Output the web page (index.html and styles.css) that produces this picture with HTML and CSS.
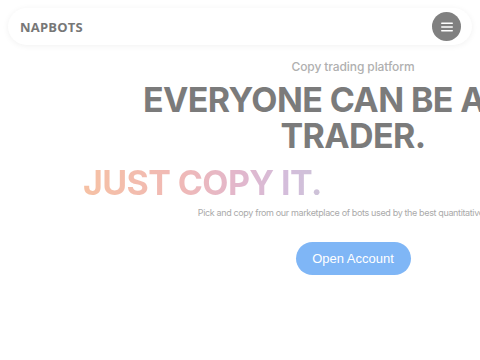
FILE: index.html
```html
<!DOCTYPE html>
<html>
<head>
<meta charset="utf-8">
<link rel="stylesheet" href="styles.css">
</head>
<body>
<div class="page">
  <header class="nav">
    <div class="logo">NAPBOTS</div>
    <button class="menu" aria-label="menu">
      <svg width="12" height="10" viewBox="0 0 12 10"><rect x="0" y="0.5" width="12" height="1.6" rx="0.8" fill="#fff"/><rect x="0" y="4.2" width="12" height="1.6" rx="0.8" fill="#fff"/><rect x="0" y="7.9" width="12" height="1.6" rx="0.8" fill="#fff"/></svg>
    </button>
  </header>
  <section class="hero">
    <p class="eyebrow">Copy trading platform</p>
    <h1 class="title"><span class="line1">EVERYONE CAN BE A</span><span class="line2">TRADER.</span></h1>
    <div class="copy-row"><span class="gradient">JUST COPY IT.</span></div>
    <p class="lead">Pick and copy from our marketplace of bots used by the best quantitative funds</p>
    <div class="cta-row"><a class="cta">Open Account</a></div>
  </section>
</div>
</body>
</html>
```
FILE: styles.css
```css
html, body { margin: 0; padding: 0; background: #fff; }
body { width: 480px; height: 360px; overflow: hidden; font-family: Inter, "Liberation Sans", sans-serif; }
.page { padding: 8px 8px 0 8px; }
.nav {
  height: 37px;
  display: flex; align-items: center; justify-content: space-between;
  padding: 0 12px;
  border-radius: 19px;
  background: #fff;
  box-shadow: 0 1px 6px rgba(0,0,0,0.06);
}
.logo { font-family: "Open Sans", sans-serif; font-weight: 700; font-size: 13px; color: #777; letter-spacing: 0.2px; }
.menu {
  width: 29px; height: 29px; border-radius: 50%; border: 0; padding: 0;
  background: #808080; display: flex; align-items: center; justify-content: center;
  margin-right: -1px;
}
.hero { width: 690px; text-align: center; }
.eyebrow { margin: 14px 0 0; font-size: 12px; font-weight: 500; color: #b0b0b0; line-height: 16px; letter-spacing: -0.1px; }
.title { margin: 7px 0 0; font-size: 34px; line-height: 36px; font-weight: 700; color: #7b7b7b; letter-spacing: -0.6px; }
.line1 { display: block; padding-right: 78px; white-space: nowrap; }
.line2 { display: block; }
.copy-row { text-align: left; padding-left: 75px; margin-top: 9px; height: 40px; }
.gradient {
  font-size: 34px; line-height: 40px; font-weight: 700; letter-spacing: -0.6px;
  background: linear-gradient(90deg, #f6c1a4 0%, #f0b9b6 40%, #e2b7cc 65%, #d4bddb 85%, #cdc3d8 100%);
  -webkit-background-clip: text; background-clip: text; color: transparent;
}
.lead { margin: 3px 0 0; font-size: 9px; line-height: 14px; color: #aaa; letter-spacing: -0.36px; white-space: nowrap; }
.cta-row { margin-top: 22px; }
.cta {
  display: inline-block; width: 115px; height: 33px; line-height: 33px; border-radius: 17px;
  background: #7fb6f6; color: #fff; font-size: 13px; font-family: "Liberation Sans", Arial, sans-serif;
}
```
